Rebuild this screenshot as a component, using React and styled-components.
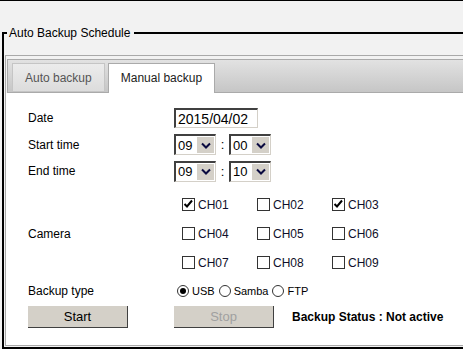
import React from "react";
import styled, { createGlobalStyle } from "styled-components";

const GlobalStyle = createGlobalStyle`
  html, body { margin: 0; padding: 0; }
  body {
    background: #f2f2f2;
    font-family: "Liberation Sans", Arial, sans-serif;
    font-size: 12px;
    color: #000;
    overflow: hidden;
    width: 463px;
    height: 349px;
  }
`;

const Page = styled.div`
  border-top: 1px solid #000;
  padding: 25px 0 0 2px;
  height: 348px;
  box-sizing: border-box;
`;

const Fieldset = styled.fieldset`
  margin: 0;
  padding: 15px 0 1px 1px;
  border: 2px solid #000;
  border-right: none;
  min-width: 0;
`;

const Legend = styled.legend`
  margin-left: 2px;
  padding: 0 4px 0 2px;
  font-size: 12px;
  line-height: 14px;
  color: #000;
`;

const Widget = styled.div`
  border: 1px solid #a9a9a9;
  border-right: none;
  background: #f2f2f2;
  height: 291px;
  box-sizing: border-box;
  display: flex;
  flex-direction: column;
`;

const Nav = styled.div`
  margin: 3px 0 0 1px;
  height: 34px;
  box-sizing: border-box;
  border: 1px solid #aaaaaa;
  border-right: none;
  background: linear-gradient(#e2e2e2, #c6c6c6);
  display: flex;
  align-items: flex-end;
  padding: 3px 0 0 4px;
  gap: 3px;
`;

const Tab = styled.div`
  height: ${(p) => (p.$active ? "30px" : "29px")};
  margin-bottom: ${(p) => (p.$active ? "-1px" : "0")};
  box-sizing: border-box;
  padding: 0 12px;
  display: flex;
  align-items: center;
  border: 1px solid ${(p) => (p.$active ? "#aaaaaa" : "#c5c5c5")};
  border-bottom: ${(p) => (p.$active ? "none" : "1px solid #c5c5c5")};
  background: ${(p) => (p.$active ? "#fff" : "linear-gradient(#ececec, #dcdcdc)")};
  color: ${(p) => (p.$active ? "#212121" : "#555")};
  font-size: 12px;
  padding-bottom: ${(p) => (p.$active ? "1px" : "0")};
`;

const Panel = styled.div`
  flex: 1;
  background: #fff;
  padding: 12px 0 0 22px;
`;

const Row = styled.div`
  display: grid;
  grid-template-columns: 146px auto;
  align-items: center;
  height: ${(p) => p.$h}px;
  margin-top: ${(p) => p.$mt || 0}px;
`;

const Label = styled.div`
  font-size: 12px;
  color: #000;
`;

const Inset = styled.div`
  display: flex;
  align-items: center;
  box-sizing: border-box;
  background: #fff;
  border-top: 2px solid #404040;
  border-left: 2px solid #404040;
  border-right: 1px solid #d4d0c8;
  border-bottom: 1px solid #d4d0c8;
`;

const DateBox = styled(Inset)`
  width: 84px;
  height: 20px;
  padding-left: 2px;
  font-size: 14px;
`;

const TimeGroup = styled.div`
  display: flex;
  align-items: center;
`;

const SelectBox = styled(Inset)`
  width: 42px;
  height: 21px;
  padding: 0 1px 0 2px;
  justify-content: space-between;
  font-size: 13px;
`;

const DropBtn = styled.div`
  width: 17px;
  height: 16px;
  background: #d4d0c8;
  display: flex;
  align-items: center;
  justify-content: center;
`;

const Colon = styled.span`
  width: 13px;
  text-align: center;
  font-size: 13px;
`;

const ChannelGrid = styled.div`
  display: grid;
  grid-template-columns: repeat(3, 75px);
  grid-auto-rows: 29px;
  align-items: center;
  padding-left: 8px;
`;

const Check = styled.label`
  display: flex;
  align-items: center;
  gap: 3px;
  font-size: 12px;
  color: #0f0f2a;
`;

const Box = styled.span`
  width: 13px;
  height: 13px;
  box-sizing: border-box;
  border: 1px solid #333;
  background: #fff;
  display: flex;
  align-items: center;
  justify-content: center;
`;

const RadioGroup = styled.div`
  display: flex;
  align-items: center;
  padding-left: 3px;
  font-size: 11px;
`;

const RadioItem = styled.label`
  display: flex;
  align-items: center;
  gap: 3px;
  margin-right: 4px;
`;

const Circle = styled.span`
  width: 12px;
  height: 12px;
  box-sizing: border-box;
  border: 1px solid #333;
  border-radius: 50%;
  background: #fff;
  display: flex;
  align-items: center;
  justify-content: center;
  &::after {
    content: "";
    width: 6px;
    height: 6px;
    border-radius: 50%;
    background: ${(p) => (p.$on ? "#000" : "transparent")};
  }
`;

const Button = styled.div`
  width: 100px;
  height: 22px;
  box-sizing: border-box;
  background: #d4d0c8;
  border-right: 1px solid #404040;
  border-bottom: 1px solid #404040;
  display: flex;
  align-items: center;
  justify-content: center;
  font-size: 13px;
  color: ${(p) => (p.$disabled ? "#a0a0a0" : "#000")};
`;

const Actions = styled.div`
  display: flex;
  align-items: center;
  gap: 18px;
`;

const Status = styled.span`
  font-weight: bold;
  font-size: 12px;
`;

const Chevron = () => (
  <svg width="10" height="7" viewBox="0 0 10 7">
    <path d="M1 1.5 L5 5.5 L9 1.5" fill="none" stroke="#0a0a40" strokeWidth="2" />
  </svg>
);

const Tick = () => (
  <svg width="11" height="11" viewBox="0 0 11 11">
    <path d="M1.5 5 L4 7.5 L9 1.5" fill="none" stroke="#000" strokeWidth="2" />
  </svg>
);

const Select = ({ value }) => (
  <SelectBox>
    <span>{value}</span>
    <DropBtn>
      <Chevron />
    </DropBtn>
  </SelectBox>
);

const channels = [
  ["CH01", true], ["CH02", false], ["CH03", true],
  ["CH04", false], ["CH05", false], ["CH06", false],
  ["CH07", false], ["CH08", false], ["CH09", false],
];

export default function App() {
  return (
    <>
      <GlobalStyle />
      <Page>
        <Fieldset>
          <Legend>Auto Backup Schedule</Legend>
          <Widget>
            <Nav>
              <Tab>Auto backup</Tab>
              <Tab $active>Manual backup</Tab>
            </Nav>
            <Panel>
              <Row $h={26}>
                <Label>Date</Label>
                <DateBox>2015/04/02</DateBox>
              </Row>
              <Row $h={27}>
                <Label>Start time</Label>
                <TimeGroup>
                  <Select value="09" />
                  <Colon>:</Colon>
                  <Select value="00" />
                </TimeGroup>
              </Row>
              <Row $h={26}>
                <Label>End time</Label>
                <TimeGroup>
                  <Select value="09" />
                  <Colon>:</Colon>
                  <Select value="10" />
                </TimeGroup>
              </Row>
              <Row $h={87} $mt={6}>
                <Label>Camera</Label>
                <ChannelGrid>
                  {channels.map(([name, on]) => (
                    <Check key={name}>
                      <Box>{on && <Tick />}</Box>
                      {name}
                    </Check>
                  ))}
                </ChannelGrid>
              </Row>
              <Row $h={28}>
                <Label>Backup type</Label>
                <RadioGroup>
                  <RadioItem><Circle $on />USB</RadioItem>
                  <RadioItem><Circle />Samba</RadioItem>
                  <RadioItem><Circle />FTP</RadioItem>
                </RadioGroup>
              </Row>
              <Row $h={24}>
                <Button>Start</Button>
                <Actions>
                  <Button $disabled>Stop</Button>
                  <Status>Backup Status : Not active</Status>
                </Actions>
              </Row>
            </Panel>
          </Widget>
        </Fieldset>
      </Page>
    </>
  );
}
